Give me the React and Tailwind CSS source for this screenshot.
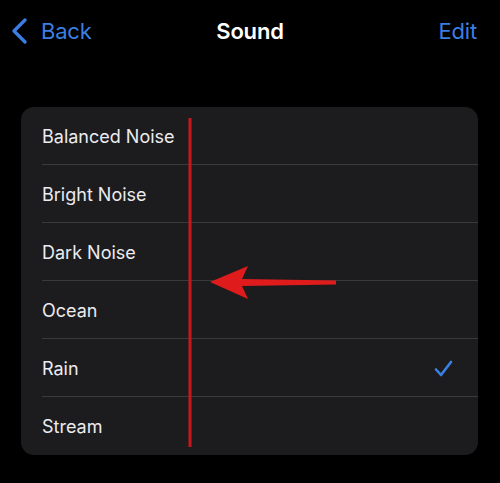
import { ChevronLeft } from 'lucide-react';

const sounds = ['Balanced Noise', 'Bright Noise', 'Dark Noise', 'Ocean', 'Rain', 'Stream'];

export default function App() {
  return (
    <div className="relative w-[500px] h-[483px] bg-black overflow-hidden font-['Inter','Liberation_Sans',sans-serif]">
      {/* nav bar */}
      <div className="relative h-[62px] flex items-center justify-between pl-[10px] pr-[23px]">
        <div className="flex items-center text-[22px]">
          <svg width="20" height="26" viewBox="0 0 20 26" className="mr-[11px]">
            <path d="M15 2 L4 13 L15 24" fill="none" stroke="#3a7fe6" strokeWidth="3.2" strokeLinecap="round" strokeLinejoin="round" />
          </svg>
          <span className="text-[#3b7fe3] tracking-[-0.2px]">Back</span>
        </div>
        <span className="absolute left-1/2 -translate-x-1/2 text-white text-[22px] font-semibold tracking-[-0.2px]">Sound</span>
        <span className="text-[#3b7fe3] text-[22px] tracking-[-0.2px]">Edit</span>
      </div>

      {/* list */}
      <div className="mt-[45px] mx-[21px] w-[457px] rounded-[13px] bg-[#1c1c1e] overflow-hidden">
        {sounds.map((s, i) => (
          <div key={s} className="pl-[21px] h-[58px] flex">
            <div className={`flex-1 flex items-center pr-[25px] pt-[1px] ${i < sounds.length - 1 ? 'border-b border-[#3a3a3c]' : ''}`}>
              <span className="flex-1 text-[18px] text-[#ebebf0] tracking-[0px]">{s}</span>
              {s === 'Rain' && (
                <svg width="19" height="17" viewBox="0 0 19 17">
                  <path d="M2 9.5 L7 15 L17 2" fill="none" stroke="#3a7fe6" strokeWidth="2.6" strokeLinecap="round" strokeLinejoin="round" />
                </svg>
              )}
            </div>
          </div>
        ))}
      </div>

      {/* red annotation */}
      <svg className="absolute left-0 top-0 pointer-events-none" width="500" height="483" viewBox="0 0 500 483">
        <rect x="188.5" y="118" width="3" height="329" fill="#c8171b" />
        <polygon points="210,282 248,266 242,279 336,280.5 336,284.5 242,286 248,299" fill="#e01b1b" />
      </svg>
    </div>
  );
}
